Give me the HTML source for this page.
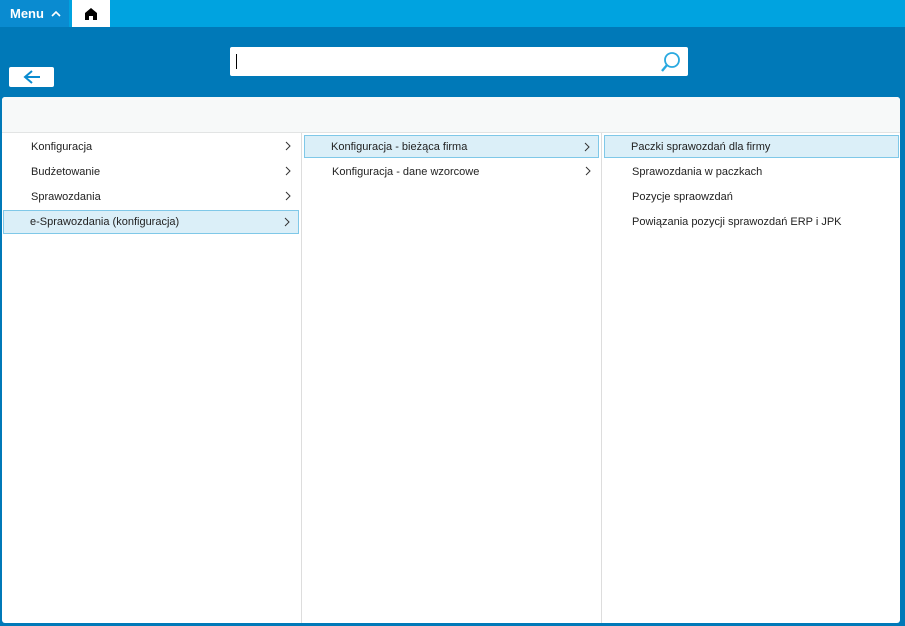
<!DOCTYPE html>
<html><head><meta charset="utf-8"><style>
body{margin:0;width:905px;height:626px;background:#0079b8;font-family:"Liberation Sans",sans-serif;position:relative;overflow:hidden}
.top{position:absolute;left:0;top:0;width:905px;height:27px;background:#00a3e0}
.menu{position:absolute;left:0;top:0;width:69px;height:27px;background:#0a8bd0;color:#fff;font-weight:bold;font-size:13px;line-height:28px;padding-left:10px;box-sizing:border-box}
.home{position:absolute;left:72px;top:0;width:38px;height:27px;background:#fff}
.back{position:absolute;left:9px;top:67px;width:45px;height:20px;background:#fff;border-radius:2px}
.search{position:absolute;left:230px;top:47px;width:458px;height:29px;background:#fff;border-radius:2px}
.panel{position:absolute;left:2px;top:97px;width:898px;height:526px;background:#fff;border-radius:3px;overflow:hidden}
.hdr{height:35px;background:#f7f9f9;border-bottom:1px solid #e2e4e4}
.col{position:absolute;top:36px;bottom:0;border-right:1px solid #ddd}
.it{position:absolute;height:23px;font-size:11px;line-height:25px;color:#222;padding-left:27px;box-sizing:border-box}
.sel{background:#dbeff8;border:1px solid #7fc8e8;line-height:23px;padding-left:26px}
.ch{position:absolute;right:8px;top:6px;width:6px;height:10px}
</style></head><body>
<div class="top"></div>
<div class="menu">Menu <svg width="10" height="8" style="margin-left:3px"><path d="M1 6L5 2L9 6" stroke="#fff" stroke-width="1.6" fill="none"/></svg></div>
<div class="home"><svg width="38" height="27"><path d="M13 20V13L19 8L25 13V20H21V16H17V20Z" fill="#000"/></svg></div>
<div class="back"><svg width="45" height="20"><path d="M16 10H31M23 4L16 10L23 16" stroke="#0a8bd0" stroke-width="2" fill="none"/></svg></div>
<div class="search"><div style="position:absolute;left:6px;top:7px;width:1px;height:15px;background:#000"></div>
<svg style="position:absolute;left:428px;top:3px" width="24" height="24"><circle cx="14" cy="10" r="7" stroke="#29a9e0" stroke-width="1.8" fill="none"/><path d="M9 15L4 21" stroke="#29a9e0" stroke-width="2.4"/></svg></div>
<div class="panel"><div class="hdr"></div>
<div class="col" style="left:0;width:299px"></div>
<div class="col" style="left:300px;width:299px"></div>
<div class="it" style="left:2px;top:38px;width:295px">Konfiguracja<svg class="ch"><path d="M1 1L5 5L1 9" stroke="#333" fill="none"/></svg></div>
<div class="it" style="left:2px;top:63px;width:295px">Budżetowanie<svg class="ch"><path d="M1 1L5 5L1 9" stroke="#333" fill="none"/></svg></div>
<div class="it" style="left:2px;top:88px;width:295px">Sprawozdania<svg class="ch"><path d="M1 1L5 5L1 9" stroke="#333" fill="none"/></svg></div>
<div class="it sel" style="left:1px;top:113px;width:296px;height:24px">e-Sprawozdania (konfiguracja)<svg class="ch"><path d="M1 1L5 5L1 9" stroke="#333" fill="none"/></svg></div>
<div class="it sel" style="left:302px;top:38px;width:295px">Konfiguracja - bieżąca firma<svg class="ch"><path d="M1 1L5 5L1 9" stroke="#333" fill="none"/></svg></div>
<div class="it" style="left:303px;top:63px;width:294px">Konfiguracja - dane wzorcowe<svg class="ch"><path d="M1 1L5 5L1 9" stroke="#333" fill="none"/></svg></div>
<div class="it sel" style="left:602px;top:38px;width:295px">Paczki sprawozdań dla firmy</div>
<div class="it" style="left:603px;top:63px;width:294px">Sprawozdania w paczkach</div>
<div class="it" style="left:603px;top:88px;width:294px">Pozycje spraowzdań</div>
<div class="it" style="left:603px;top:113px;width:294px">Powiązania pozycji sprawozdań ERP i JPK</div>
</div>
</body></html>
